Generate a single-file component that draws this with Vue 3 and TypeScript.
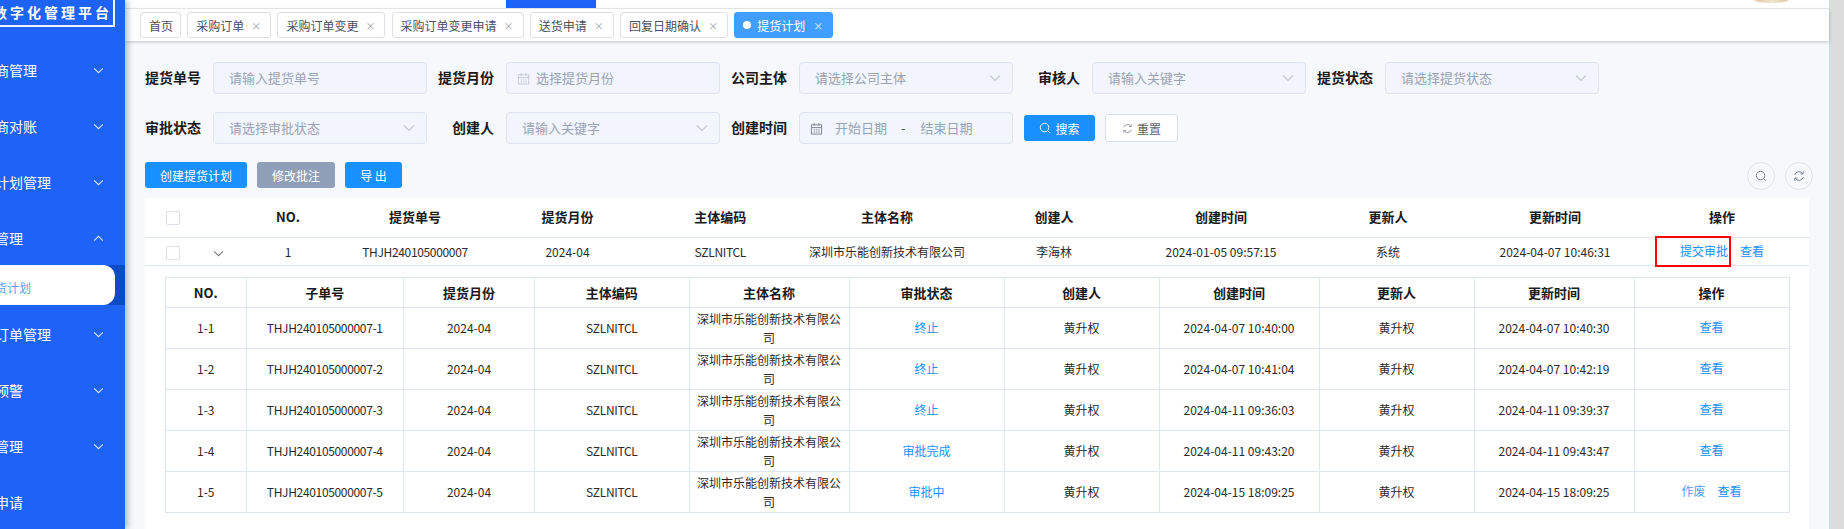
<script setup lang="ts">
interface Field { label: string; placeholder: string; kind: 'input' | 'select' | 'month' | 'range' }

const sideTop = ['供应商管理', '供应商对账', '提货计划管理', '提货管理']
const sideBottom = ['采购订单管理', '交期预警', '基础管理', '送货申请']
const tabs = ['采购订单', '采购订单变更', '采购订单变更申请', '送货申请', '回复日期确认']

const fields: Field[] = [
  { label: '提货单号', placeholder: '请输入提货单号', kind: 'input' },
  { label: '提货月份', placeholder: '选择提货月份', kind: 'month' },
  { label: '公司主体', placeholder: '请选择公司主体', kind: 'select' },
  { label: '审核人', placeholder: '请输入关键字', kind: 'select' },
  { label: '提货状态', placeholder: '请选择提货状态', kind: 'select' },
  { label: '审批状态', placeholder: '请选择审批状态', kind: 'select' },
  { label: '创建人', placeholder: '请输入关键字', kind: 'select' },
  { label: '创建时间', placeholder: '', kind: 'range' },
]

const outerHead = ['NO.', '提货单号', '提货月份', '主体编码', '主体名称', '创建人', '创建时间', '更新人', '更新时间', '操作']
const innerHead = ['NO.', '子单号', '提货月份', '主体编码', '主体名称', '审批状态', '创建人', '创建时间', '更新人', '更新时间', '操作']

const rows = [
  { no: '1-1', status: '终止', created: '2024-04-07 10:40:00', updated: '2024-04-07 10:40:30', voidable: false },
  { no: '1-2', status: '终止', created: '2024-04-07 10:41:04', updated: '2024-04-07 10:42:19', voidable: false },
  { no: '1-3', status: '终止', created: '2024-04-11 09:36:03', updated: '2024-04-11 09:39:37', voidable: false },
  { no: '1-4', status: '审批完成', created: '2024-04-11 09:43:20', updated: '2024-04-11 09:43:47', voidable: false },
  { no: '1-5', status: '审批中', created: '2024-04-15 18:09:25', updated: '2024-04-15 18:09:25', voidable: true },
]
</script>

<template>
  <div class="app">
    <aside class="sidebar">
      <div class="logo-wrap">
        <div class="logo">数字化管理平台</div>
      </div>
      <div v-for="(name, i) in sideTop" :key="name" class="side-item">
        <span class="side-text">{{ name }}</span>
        <svg class="side-chev" viewBox="0 0 12 8" width="11" height="7">
          <path v-if="i === 3" d="M1 6.5 6 1.5l5 5" />
          <path v-else d="M1 1.5 6 6.5l5-5" />
        </svg>
      </div>
      <div class="side-sub">
        <div class="side-sub-inner"><span class="side-sub-text">提货计划</span></div>
      </div>
      <div v-for="(name, i) in sideBottom" :key="name" class="side-item">
        <span class="side-text">{{ name }}</span>
        <svg v-if="i < 3" class="side-chev" viewBox="0 0 12 8" width="11" height="7">
          <path d="M1 1.5 6 6.5l5-5" />
        </svg>
      </div>
    </aside>

    <main class="main">
      <header class="topbar">
        <div class="nav-active"></div>
        <div class="avatar"></div>
      </header>

      <nav class="tabs">
        <span class="tab tab-home">首页</span>
        <span v-for="t in tabs" :key="t" class="tab">{{ t }}<i class="tab-x">×</i></span>
        <span class="tab tab-on"><i class="tab-dot"></i>提货计划<i class="tab-x">×</i></span>
      </nav>

      <section class="content">
        <div class="filters">
          <div v-for="f in fields" :key="f.label" class="field">
            <label class="field-label">{{ f.label }}</label>
            <div class="control">
              <template v-if="f.kind === 'range'">
                <svg class="cal cal-dark" viewBox="0 0 14 14" width="13" height="13">
                  <path d="M1.5 3h11v10h-11zM1.5 6h11M4.5 1v3M9.5 1v3M4 8.5h1.5M6.5 8.5H8M9 8.5h1.5M4 10.8h1.5M6.5 10.8H8M9 10.8h1.5" />
                </svg>
                <span class="ph range-a">开始日期</span>
                <span class="range-dash">-</span>
                <span class="ph range-b">结束日期</span>
              </template>
              <template v-else>
                <svg v-if="f.kind === 'month'" class="cal" viewBox="0 0 14 14" width="13" height="13">
                  <path d="M1.5 3h11v10h-11zM1.5 6h11M4.5 1v3M9.5 1v3M4 8.5h1.5M6.5 8.5H8M9 8.5h1.5M4 10.8h1.5M6.5 10.8H8M9 10.8h1.5" />
                </svg>
                <span class="ph" :class="{ 'ph-month': f.kind === 'month' }">{{ f.placeholder }}</span>
                <svg v-if="f.kind === 'select'" class="sel-chev" viewBox="0 0 12 8" width="12" height="8">
                  <path d="M1 1.5 6 6.5l5-5" />
                </svg>
              </template>
            </div>
          </div>
          <div class="filter-actions">
            <button class="btn btn-search">
              <svg viewBox="0 0 14 14" width="12" height="12"><circle cx="6.5" cy="6.5" r="5" /><path d="m10 10 2.5 2.5" /></svg>
              搜索
            </button>
            <button class="btn btn-reset">
              <svg viewBox="0 0 14 14" width="11" height="11"><path d="M2 5.5A5.2 5.2 0 0 1 11.3 4.3M12 8.5A5.2 5.2 0 0 1 2.7 9.7M11.8 1.6v3h-3M2.2 12.4v-3h3" /></svg>
              重置
            </button>
          </div>
        </div>

        <div class="toolbar">
          <div class="toolbar-left">
            <button class="btn btn-primary btn-create">创建提货计划</button>
            <button class="btn btn-muted">修改批注</button>
            <button class="btn btn-primary btn-export">导 出</button>
          </div>
          <div class="toolbar-right">
            <span class="round">
              <svg viewBox="0 0 14 14" width="12" height="12"><circle cx="6.5" cy="6.5" r="5" /><path d="m10 10 2.5 2.5" /></svg>
            </span>
            <span class="round">
              <svg viewBox="0 0 14 14" width="12" height="12"><path d="M2 5.5A5.2 5.2 0 0 1 11.3 4.3M12 8.5A5.2 5.2 0 0 1 2.7 9.7M11.8 1.6v3h-3M2.2 12.4v-3h3" /></svg>
            </span>
          </div>
        </div>

        <div class="panel">
          <table class="outer">
            <colgroup>
              <col class="c-sel" /><col class="c-exp" /><col class="c-no" /><col class="c-bill" /><col class="c-month" />
              <col class="c-code" /><col class="c-w" /><col class="c-w" /><col class="c-w" /><col class="c-w" />
              <col class="c-w" /><col class="c-w" /><col class="c-end" />
            </colgroup>
            <thead>
              <tr>
                <th><span class="check"></span></th>
                <th></th>
                <th v-for="h in outerHead" :key="h">{{ h }}</th>
                <th></th>
              </tr>
            </thead>
            <tbody>
              <tr class="main-row">
                <td><span class="check"></span></td>
                <td>
                  <svg class="exp-chev" viewBox="0 0 12 8" width="11" height="7"><path d="M1 1.5 6 6.5l5-5" /></svg>
                </td>
                <td>1</td>
                <td class="code">THJH240105000007</td>
                <td>2024-04</td>
                <td class="code">SZLNITCL</td>
                <td>深圳市乐能创新技术有限公司</td>
                <td>李海林</td>
                <td>2024-01-05 09:57:15</td>
                <td>系统</td>
                <td>2024-04-07 10:46:31</td>
                <td class="op-cell"><a class="link">提交审批</a><a class="link">查看</a></td>
                <td></td>
              </tr>
              <tr>
                <td colspan="13" class="expand">
                  <table class="inner">
                    <colgroup>
                      <col class="i-no" /><col class="i-bill" /><col class="i-month" /><col class="i-code" /><col class="i-name" />
                      <col class="i-a" /><col class="i-a" /><col class="i-name" /><col class="i-a" /><col class="i-name" /><col class="i-a" />
                    </colgroup>
                    <thead>
                      <tr><th v-for="h in innerHead" :key="h">{{ h }}</th></tr>
                    </thead>
                    <tbody>
                      <tr v-for="r in rows" :key="r.no">
                        <td>{{ r.no }}</td>
                        <td class="code">THJH240105000007-{{ r.no.slice(2) }}</td>
                        <td>2024-04</td>
                        <td class="code">SZLNITCL</td>
                        <td class="name-cell">深圳市乐能创新技术有限公司</td>
                        <td><a class="link">{{ r.status }}</a></td>
                        <td>黄升权</td>
                        <td>{{ r.created }}</td>
                        <td>黄升权</td>
                        <td>{{ r.updated }}</td>
                        <td class="inner-op"><a v-if="r.voidable" class="link link-void">作废</a><a class="link">查看</a></td>
                      </tr>
                    </tbody>
                  </table>
                </td>
              </tr>
            </tbody>
          </table>
          <div class="red-box"></div>
        </div>
      </section>
    </main>
  </div>
</template>

<style>
html, body { margin: 0; overflow: hidden; }
</style>

<style scoped>
.app {
  display: flex;
  width: 1844px;
  height: 529px;
  overflow: hidden;
  background: #dcdcdc;
  font-family: "Noto Sans CJK SC", "Noto Sans", sans-serif;
  font-size: 12px;
  color: #2b2b2b;
}
.sidebar {
  position: relative;
  z-index: 2;
  flex: 0 0 125px;
  overflow: hidden;
  background: #1e62f6;
  box-shadow: 3px 0 6px rgba(60, 70, 90, .35);
  color: #fff;
}
.logo-wrap { height: 43px; }
.logo {
  box-sizing: border-box;
  width: 130px;
  height: 27px;
  margin-left: -15px;
  border: 2px solid #eef3ff;
  border-top: 0;
  padding-left: 6px;
  font-size: 14px;
  line-height: 25px;
  font-weight: 700;
  letter-spacing: 3px;
  white-space: nowrap;
}
.side-item { display: flex; align-items: center; height: 56px; position: relative; }
.side-text { margin-left: -33px; padding-bottom: 2px; font-size: 14px; white-space: nowrap; }
.side-chev { position: absolute; left: 93px; top: 24px; }
.side-chev path, .exp-chev path, .sel-chev path { fill: none; stroke-width: 1.2; }
.side-chev path { stroke: #d6e4ff; }
.side-sub { height: 40px; margin: -2px 0 2px; background: #0e4bc8; position: relative; }
.side-sub-inner {
  width: 115px;
  height: 40px;
  background: #fff;
  border-radius: 0 12px 12px 0;
  display: flex;
  align-items: center;
}
.side-sub-text { margin-left: -17px; color: #5d9ff8; white-space: nowrap; padding-top: 4px; }

.main {
  flex: 0 0 1705px;
  box-sizing: border-box;
  border-right: 1px solid #c5dcf5;
  display: flex;
  flex-direction: column;
  background: #f7f8fb;
  min-width: 0;
}
.topbar {
  position: relative;
  flex: none;
  height: 9px;
  box-sizing: border-box;
  overflow: hidden;
  background: #fff;
  border-bottom: 1px solid #ececec;
}
.nav-active { position: absolute; left: 381px; top: 0; width: 90px; height: 8px; background: #1e62f6; }
.avatar {
  position: absolute;
  left: 1629px;
  top: -4px;
  width: 35px;
  height: 7px;
  border-radius: 50%;
  background: linear-gradient(90deg, #e2bf9e, #f0e3c8 50%, #dfcba6);
}
.tabs {
  position: relative;
  z-index: 1;
  flex: none;
  display: flex;
  gap: 6.2px;
  height: 32px;
  box-sizing: border-box;
  padding: 3px 0 0 15px;
  background: #fff;
  box-shadow: 0 1px 3px rgba(60, 75, 110, .3);
}
.tab {
  box-sizing: border-box;
  display: flex;
  align-items: center;
  height: 26px;
  padding: 0 8px;
  border: 1px solid #dcdfe6;
  border-radius: 3px;
  color: #495060;
  background: #fff;
  white-space: nowrap;
}
.tab-home { width: 41px; }
.tab-x {
  box-sizing: border-box;
  width: 18px;
  padding-left: 7px;
  text-align: left;
  font-style: normal;
  font-size: 10px;
  color: #a0a3a8;
}
.tab-on { background: #409eff; border-color: #409eff; color: #fff; }
.tab-on .tab-x { width: 19px; padding-left: 8px; color: #e8f3ff; }
.tab-dot {
  width: 8px;
  height: 8px;
  border-radius: 50%;
  background: #fff;
  margin: 0 6px 0 0;
}

.content { flex: 1; padding: 21px 20px 0; min-height: 0; display: flex; flex-direction: column; }
.filters { display: grid; grid-template-columns: repeat(5, 282px); column-gap: 11px; row-gap: 18px; }
.field { display: flex; align-items: center; gap: 12px; }
.field-label {
  width: 56px;
  flex: none;
  padding-bottom: 2px;
  text-align: right;
  font-size: 14px;
  font-weight: 700;
  color: #1a1a1a;
  white-space: nowrap;
}
.control {
  box-sizing: border-box;
  position: relative;
  flex: none;
  display: flex;
  align-items: center;
  width: 214px;
  height: 32px;
  padding-left: 15px;
  background: #f2f5fb;
  border: 1px solid #dde3f1;
  border-radius: 4px;
}
.ph { padding-bottom: 2px; font-size: 13px; color: #9aa3b5; white-space: nowrap; }
.ph-month { margin-left: 6px; }
.cal { margin-left: -5px; }
.cal path { fill: none; stroke: #c3c7cf; stroke-width: 1; }
.cal-dark path { stroke: #7a7f8c; }
.range-a { margin-left: 12px; }
.range-dash { margin: 0 15px 0 14px; padding-bottom: 2px; color: #555; font-size: 13px; }
.sel-chev { position: absolute; right: 11px; top: 11px; }
.sel-chev path { stroke: #c4c8d0; }

.filter-actions { display: flex; align-items: center; gap: 10px; }
.btn {
  box-sizing: border-box;
  display: inline-flex;
  align-items: center;
  justify-content: center;
  gap: 4px;
  height: 26px;
  padding: 0;
  border: 0;
  border-radius: 3px;
  font: inherit;
  font-size: 12px;
  color: #fff;
}
.btn svg { fill: none; stroke: currentColor; stroke-width: 1.1; }
.btn-search { width: 71px; background: #1890ff; }
.btn-reset { width: 73px; height: 28px; background: #fff; border: 1px solid #dcdfe6; color: #606266; }
.btn-reset svg { stroke: #8a8f99; }
.toolbar { display: flex; justify-content: space-between; align-items: flex-start; margin-top: 18px; height: 36px; flex: none; }
.toolbar-left { display: flex; gap: 10px; }
.btn-primary { background: #1890ff; }
.btn-muted { width: 78px; background: #8f9fb8; }
.btn-create { width: 102px; }
.btn-export { width: 57px; }
.toolbar-right { display: flex; gap: 10px; margin-right: -4px; }
.round {
  box-sizing: border-box;
  display: flex;
  align-items: center;
  justify-content: center;
  width: 28px;
  height: 28px;
  border: 1px solid #dfe3ea;
  border-radius: 50%;
}
.round svg { fill: none; stroke: #6f7d91; stroke-width: 1.1; }

.panel { position: relative; flex: 1; background: #fff; min-height: 0; }
.outer, .inner { border-collapse: collapse; table-layout: fixed; }
.outer { width: 1664px; }
.outer th { height: 37px; padding: 0 0 2px; font-size: 13px; font-weight: 700; color: #1a1a1a; border-bottom: 1px solid #dfe5f2; }
.main-row td {
  height: 27px;
  padding: 0;
  text-align: center;
  white-space: nowrap;
  border-bottom: 1px solid #dfe5f2;
}
.code { letter-spacing: -.33px; }
.check {
  display: inline-block;
  box-sizing: border-box;
  width: 14px;
  height: 14px;
  border: 1px solid #dcdfe6;
  border-radius: 2px;
  vertical-align: middle;
  background: #fff;
}
.exp-chev { margin-right: 8px; }
.exp-chev path { stroke: #777; }
.c-sel { width: 56px; }
.c-exp { width: 43px; }
.c-no { width: 88px; }
.c-bill { width: 166px; }
.c-month { width: 139px; }
.c-code { width: 166.5px; }
.c-w { width: 167px; }
.c-end { width: 3.5px; }
.link { color: #1890ff; cursor: pointer; }
.link-void { color: #5a98f5; margin-right: 12px; }
.main-row .op-cell { height: 25px; padding-bottom: 2px; }
.op-cell .link + .link { margin-left: 12px; }
.expand { padding: 11px 20px 0; }
.inner { width: 1624px; }
.inner th, .inner td { border: 1px solid #e0e6f1; padding: 0; text-align: center; }
.inner th { height: 29px; font-size: 13px; font-weight: 700; color: #1a1a1a; }
.inner td { height: 40px; line-height: 19.5px; }
.inner .name-cell { padding: 0 6px; }
.inner .inner-op { height: 38px; padding-bottom: 2px; }
.i-no { width: 80.5px; }
.i-bill { width: 157.5px; }
.i-month { width: 131px; }
.i-code { width: 154.5px; }
.i-name { width: 160px; }
.i-a { width: 155px; }
.red-box {
  position: absolute;
  left: 1510px;
  top: 38px;
  width: 76px;
  height: 31px;
  box-sizing: border-box;
  border: 2px solid #f00;
}
</style>
